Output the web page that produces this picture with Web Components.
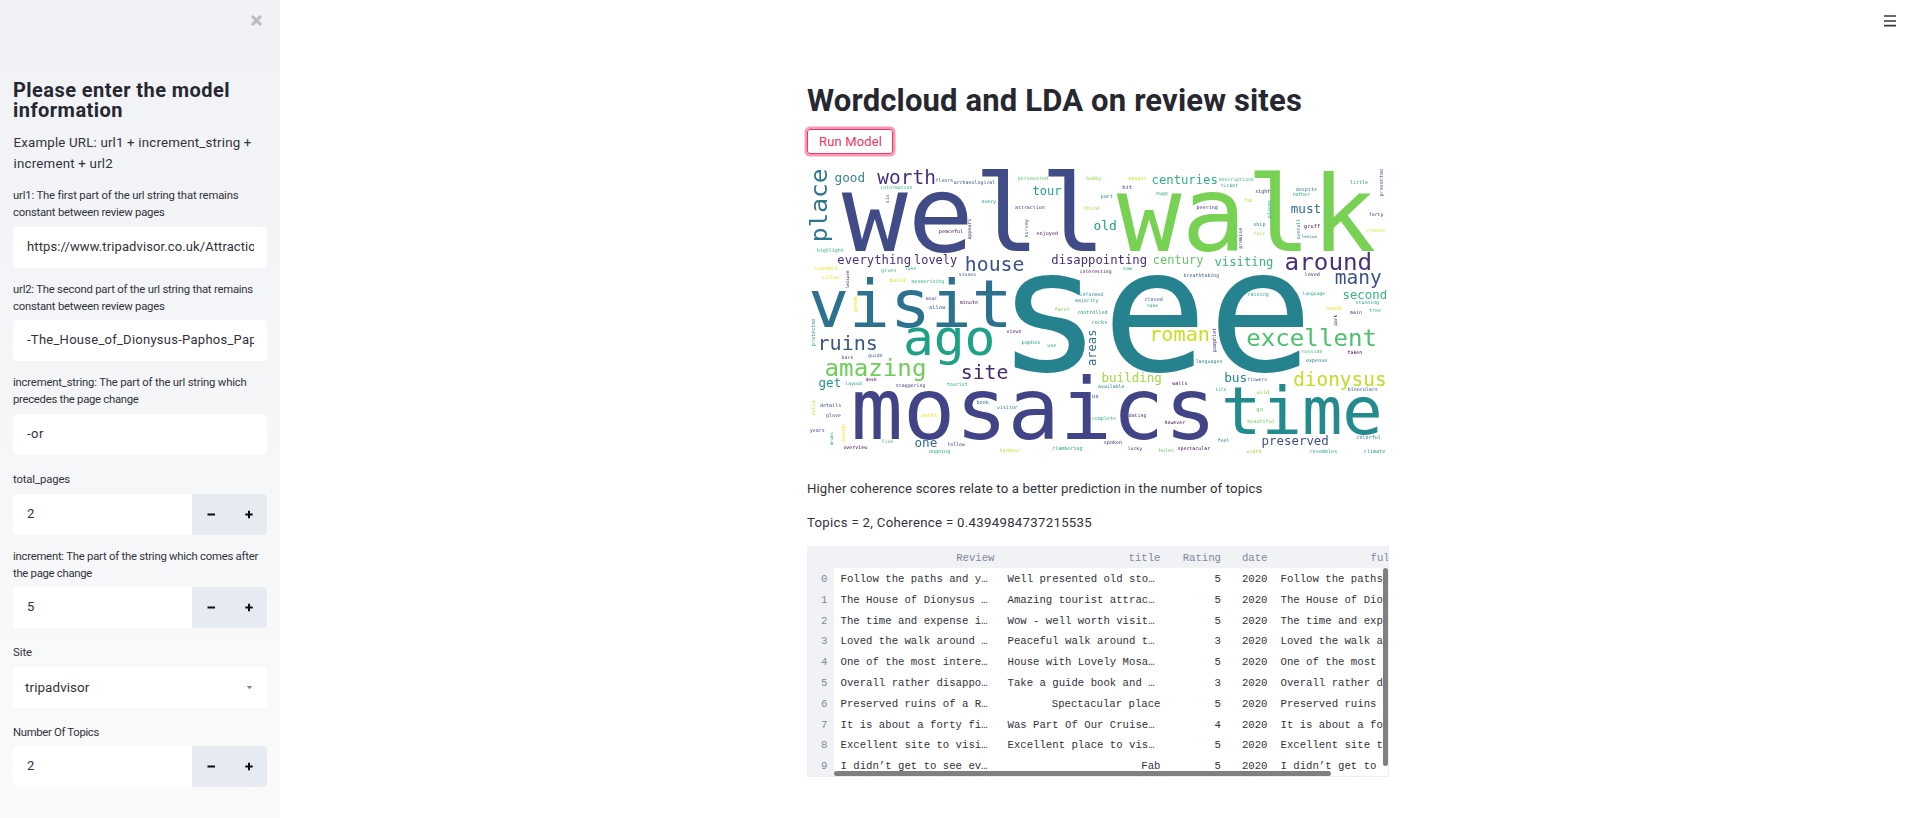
<!DOCTYPE html>
<html lang="en">
<head>
<meta charset="utf-8">
<title>Wordcloud and LDA on review sites</title>
<style>
html,body{margin:0;height:100%;background:#fff;overflow:hidden}
body{font-family:Roboto,"Liberation Sans",sans-serif;color:#31323b;font-size:13px}
</style>
</head>
<body>
<review-app></review-app>
<script>
const define = (name, html, setup) => {
  const template = document.createElement('template');
  template.innerHTML = html;
  customElements.define(name, class extends HTMLElement {
    connectedCallback() {
      if (this.shadowRoot) return;
      this.attachShadow({mode: 'open'}).appendChild(template.content.cloneNode(true));
      if (setup) setup(this, this.shadowRoot);
    }
  });
};

/* One line of text tracked out or in to a given width. */
define('text-line', `<style>:host{display:block;white-space:pre}</style><span id="t"></span>`, (el, root) => {
  const span = root.getElementById('t');
  const text = el.getAttribute('text');
  span.textContent = text;
  const w = parseFloat(el.getAttribute('w'));
  if (w) span.style.letterSpacing = ((w - span.getBoundingClientRect().width) / text.length).toFixed(4) + 'px';
});

define('form-field', `<style>
:host{display:block;margin-top:var(--gap,13px)}
.label{font-size:11.3px;line-height:17px;margin-bottom:var(--lg,6px)}
.box{height:41px;background:#fff;border-radius:4px;display:flex;overflow:hidden}
</style><div class="label"><slot name="label"></slot></div><div class="box"><slot></slot></div>`);

define('text-value', `<style>
:host{display:block;flex:1;min-width:0;overflow:hidden;margin:0 13px 0 14px;font-size:13px;line-height:40px;height:41px}
</style><slot></slot>`);

define('step-buttons', `<style>
:host{display:flex;width:75px;background:#e6eaf1;align-items:center;flex:none}
svg{display:block}
</style><svg width="75" height="41" viewBox="0 0 75 41"><path d="M15.5 20.5h7.5M53.3 20.5h7.4M57 16.8v7.4" stroke="#0c0c10" stroke-width="2" fill="none"/></svg>`);

define('select-value', `<style>
:host{display:flex;flex:1;align-items:center;padding:0 14px 0 12px;font-size:13.4px;line-height:40px}
svg{margin-left:auto}
</style><slot></slot><svg width="7" height="5" viewBox="0 0 7 5"><path d="M.8 1h5.4L3.5 4.2z" fill="#808495"/></svg>`);

define('side-bar', `<style>
:host{display:block;box-sizing:border-box;width:280px;height:818px;padding:14px 13px 0;background:linear-gradient(180deg,#f0f2f6,#fafafa);flex:none}
.close{display:block;margin:0 4px 0 auto}
h2{margin:53px 0 0 0;font-size:20px;line-height:20px;font-weight:700;color:#262730}
.ex{margin:12px 0 0 .5px;font-size:13.3px;line-height:21px}
</style>
<svg class="close" width="13" height="13" viewBox="0 0 13 13"><path d="M2 2l9 9M11 2l-9 9" stroke="#bcbdc4" stroke-width="3.1" fill="none"/></svg>
<h2><text-line text="Please enter the model" w="217"></text-line><text-line text="information" w="110"></text-line></h2>
<div class="ex"><text-line text="Example URL: url1 + increment_string +" w="238"></text-line><text-line text="increment + url2" w="99.5"></text-line></div>
<form-field style="--gap:13px"><div slot="label"><text-line text="url1: The first part of the url string that remains" w="225"></text-line><text-line text="constant between review pages" w="151.5"></text-line></div>
<text-value><text-line text="https://www.tripadvisor.co.uk/Attractions" w="243"></text-line></text-value></form-field>
<form-field style="--lg:5px"><div slot="label"><text-line text="url2: The second part of the url string that remains" w="240"></text-line><text-line text="constant between review pages" w="151.5"></text-line></div>
<text-value><text-line text="-The_House_of_Dionysus-Paphos_Paphos" w="252"></text-line></text-value></form-field>
<form-field><div slot="label"><text-line text="increment_string: The part of the url string which" w="233.5"></text-line><text-line text="precedes the page change" w="125.5"></text-line></div>
<text-value><text-line text="-or" w="17"></text-line></text-value></form-field>
<form-field style="--gap:16px;--lg:6px"><text-line slot="label" text="total_pages" w="57"></text-line>
<text-value><text-line text="2"></text-line></text-value><step-buttons></step-buttons></form-field>
<form-field style="--lg:5px;--gap:13px"><div slot="label"><text-line text="increment: The part of the string which comes after" w="245"></text-line><text-line text="the page change" w="79"></text-line></div>
<text-value><text-line text="5"></text-line></text-value><step-buttons></step-buttons></form-field>
<form-field style="--gap:16px;--lg:6px"><text-line slot="label" text="Site" w="19"></text-line>
<select-value><text-line text="tripadvisor" w="64.5"></text-line></select-value></form-field>
<form-field style="--gap:16px;--lg:5px"><text-line slot="label" text="Number Of Topics" w="86"></text-line>
<text-value><text-line text="2"></text-line></text-value><step-buttons></step-buttons></form-field>`);

/* text, ink start, ink end, baseline, colour; upright words list y instead of x */
const words = [
['well',841.7,1095.3,251,'#404b87'],['walk',1116.7,1374.7,251,'#77d153'],['see',1014,1303.3,370.5,'#26828e'],
['visit',811.3,1006,326.7,'#2c728e'],['mosaics',855,1208.3,439,'#414487'],['time',1225,1379,434.3,'#238a8d'],
['good',835.3,864,181.5,'#38868c'],['worth',877.3,934.3,183.7,'#46307c'],['floors',936,952.7,181.7,'#39568c'],
['archaeological',954,995,184.3,'#3b528b'],['information',880.7,912,188.7,'#35b779'],['every',981.7,996,203,'#21918c'],
['peaceful',939.3,962.7,233.3,'#440154'],['highlight',817.3,843.3,252.3,'#2ab07f'],['everything',838,910,264,'#46327e'],
['lovely',915,956.7,264,'#482878'],['standard',814.7,837.3,270,'#f0e528'],['gives',881.3,896,271.7,'#35b779'],
['take',905.3,916,270,'#35b779'],['villas',822,839,279,'#f0e528'],['build',890,905.3,282,'#dfe318'],
['mesmerising',911.7,944,283.3,'#2fb47c'],['stones',959.3,975.7,276.3,'#3b528b'],['house',966.7,1023.3,271.3,'#3b528b'],
['near',926,936.7,300.3,'#482173'],['allow',929.3,945.3,309.3,'#31688e'],['minute',960,977.7,303.7,'#46085c'],
['persevered',1018,1047.7,180,'#5ec962'],['tour',1033.3,1061,194.7,'#1fa187'],['hubby',1086.7,1101,180,'#8fd744'],
['mosaic',1128.7,1146,180,'#c8e020'],['centuries',1152.7,1216.7,184.3,'#2db27d'],['bit',1122.7,1131.7,188.7,'#414487'],
['part',1101,1112.7,197.7,'#26828e'],['huge',1156.7,1167.7,194.7,'#21a585'],['third',1084,1098.7,210.3,'#a0da39'],
['attraction',1015.3,1044.3,209.3,'#414487'],['enjoyed',1036.7,1057.7,235.3,'#482173'],['old',1094.3,1115.7,229.7,'#1fa187'],
['peering',1197,1217.3,209.3,'#472d7b'],['disappointing',1052,1146,264.3,'#472d7b'],['century',1154,1203,264.3,'#5ec962'],
['interesting',1080,1111.3,273,'#5c1065'],['saw',1123.3,1132.3,270.3,'#35b779'],['breathtaking',1184,1219,276.7,'#33638d'],
['informed',1080,1102.7,296.3,'#21918c'],['majority',1075.3,1098.3,302,'#21918c'],['closed',1145,1162.3,301,'#3b528b'],
['take',1147,1158,307.3,'#21a585'],['facet',1055,1069.3,310.5,'#7ad151'],['controlled',1077.7,1107,314,'#21918c'],
['rocks',1092.3,1107,324,'#22a884'],['descriptions',1219,1253.7,181.3,'#3dbc74'],['ticket',1221,1237.7,187.3,'#21918c'],
['sight',1255.7,1269.7,193,'#482173'],['fab',1244.7,1252.3,201.7,'#c2df23'],['despite',1296,1316.7,190.7,'#26828e'],
['rather',1293,1310,196,'#21a585'],['little',1350.7,1367.7,184.3,'#26828e'],['must',1291.3,1320,213,'#2f6c8e'],
['forty',1369.3,1383.3,216,'#481c6e'],['ship',1253.7,1265.3,226.3,'#2a788e'],['fair',1254,1264.7,235,'#90d743'],
['gruff',1304.3,1319.7,228.3,'#440154'],['lesson',1302,1316.7,238,'#2a788e'],['cruise',1367.3,1384.7,232.3,'#dde318'],
['visiting',1215,1272.3,266,'#35b779'],['around',1286,1370,270,'#46307e'],['loved',1305,1319.3,276,'#472d7b'],
['many',1335.7,1381,284,'#3b528b'],['second',1343.7,1386,299.3,'#35b779'],['stunning',1356,1378.7,303.7,'#22a884'],
['raining',1248.3,1268.3,296.3,'#22a884'],['language',1302.7,1325,294.7,'#22a884'],['round',1326.7,1341.3,309.7,'#e5e419'],
['main',1350,1361.7,313.7,'#404688'],['tree',1369.3,1380.7,312,'#2db27d'],
['ruins',821,876,350,'#39568c'],['ago',906,992.3,355.3,'#1fa187'],['back',842,853.3,359,'#39568c'],
['guide',868.3,882.3,356.7,'#3b528b'],['amazing',826,924.3,376.3,'#6ece58'],['desk',865.7,876.7,381,'#440154'],
['get',819.3,840,386.7,'#1f968b'],['layout',845.7,862.3,385,'#1fa187'],['staggering',896.3,925,386.7,'#453781'],
['tourist',947,967.3,386.3,'#28ae80'],['site',962.7,1007.3,379,'#482878'],['details',820.3,840.7,407,'#3b528b'],
['glove',826.3,840.7,417.3,'#3b528b'],['years',810,824.3,431.7,'#3b528b'],['overview',843.7,867.3,449,'#440154'],
['five',882,893,443,'#4ac16d'],['one',915.3,936.7,447.3,'#2f6c8e'],['follow',947.7,965,446,'#472d7b'],
['ongoing',929.3,949.7,453.3,'#22a884'],['paths',921.7,936.7,417.3,'#f0e528'],['book',977,988.7,403.7,'#2c728e'],
['visitor',997.3,1017.7,408.7,'#2c728e'],['views',1006.7,1021,332.7,'#482173'],['paphos',1022,1040,344.3,'#22a884'],
['use',1047.7,1056,346.7,'#22a884'],['roman',1152.7,1208.3,341.3,'#c8e020'],['building',1102.7,1160.7,382.3,'#a0da39'],
['available',1098.3,1124.3,388,'#26828e'],['walls',1172.3,1187,384.7,'#440154'],['us',1092.3,1098.3,398,'#3b528b'],
['complete',1092.3,1115.7,420,'#35b779'],['dating',1129,1146,417.3,'#482878'],['however',1165,1185,424,'#440154'],
['languages',1196,1222,363.3,'#26828e'],['spoken',1104.3,1121.7,444.3,'#472d7b'],['lucky',1128,1142,450.3,'#472d7b'],
['clambering',1052.7,1082,450.3,'#1fa187'],['harbour',1000,1020,451.7,'#bddf26'],['holes',1159.3,1173.7,451.7,'#5ec962'],
['spectacular',1178,1210,450.3,'#440154'],['excellent',1247.7,1374.7,345.7,'#4ac16d'],['russian',1302,1322.3,353,'#3dbc74'],
['taken',1347.7,1362,354.3,'#440154'],['expense',1306.3,1327,361.7,'#26828e'],['bus',1225.3,1246,382.3,'#22898c'],
['flowers',1247.7,1266.7,381,'#3b528b'],['dionysus',1294.3,1384.7,386.3,'#bddf26'],['binoculars',1348.3,1377.3,391,'#39568c'],
['life',1215.3,1226,390.7,'#22a884'],['wild',1256.7,1268.7,393.7,'#90d743'],['go',1256.7,1262.7,411.3,'#5ec962'],
['beautiful',1247.7,1274.3,422.7,'#6ece58'],['preserved',1262.7,1327.7,444.7,'#414d88'],['feel',1218,1229,441.7,'#2c728e'],
['colorful',1357,1380.3,438.7,'#2c728e'],['width',1246.7,1261,453.3,'#a0da39'],['resembles',1310.7,1336.7,453.3,'#22a884'],
['climate',1364.3,1385,453.3,'#21918c']
];
const upright = [
['place',240,170,827.3,'#2a788e'],['six',202.7,194.7,888.7,'#3b528b'],['appears',239.3,219.3,971.3,'#482878'],
['leisure',288,270.7,849.3,'#440154'],['greek',312,296,857.3,'#e5e419'],['survey',237,219.3,1028,'#33638d'],
['presented',196,169.3,1383.3,'#3b528b'],['places',217.7,200.3,1271.3,'#1f9e89'],['premise',248.3,228,1242.3,'#453781'],
['overall',239.3,219.3,1300,'#26828e'],['park',325.3,314.7,1337.3,'#440154'],['protected',345.7,319,815.3,'#21918c'],
['villa',415.3,400.7,814.7,'#c8e020'],['drums',444.7,432.7,833,'#21918c'],['enough',441.7,424.3,845.3,'#f0e528'],
['areas',365.3,330.7,1096.3,'#2c728e'],['pamphlet',351.7,328.3,1216,'#46327e']
];

define('word-cloud', `<style>
:host{display:block;width:582px;height:291px}
svg{display:block;overflow:visible;font-family:"DejaVu Sans Mono",monospace;filter:blur(.45px)}
</style><svg width="582" height="291" viewBox="807 164 582 291"></svg>`, (el, root) => {
  const ctx = document.createElement('canvas').getContext('2d');
  ctx.font = '200px "DejaVu Sans Mono", monospace';
  const ink = word => {
    const m = ctx.measureText(word);
    return {left: -m.actualBoundingBoxLeft / 200, width: (m.actualBoundingBoxRight + m.actualBoundingBoxLeft) / 200};
  };
  const out = words.map(([t, a, b, y, c]) => {
    const k = ink(t), size = (b - a) / k.width;
    return `<text transform="translate(${(a - k.left * size).toFixed(2)} ${y}) scale(1 .975)" font-size="${size.toFixed(3)}" fill="${c}">${t}</text>`;
  }).concat(upright.map(([t, a, b, x, c]) => {
    const k = ink(t), size = (a - b) / k.width;
    return `<text transform="translate(${x} ${(a + k.left * size).toFixed(2)}) rotate(-90) scale(1 .975)" font-size="${size.toFixed(3)}" fill="${c}">${t}</text>`;
  }));
  root.querySelector('svg').innerHTML = out.join('');
});

const rows = [
['Follow the paths and y…','Well presented old sto…',5,'Follow the paths and y…'],
['The House of Dionysus …','Amazing tourist attrac…',5,'The House of Dionysus …'],
['The time and expense i…','Wow - well worth visit…',5,'The time and expense i…'],
['Loved the walk around …','Peaceful walk around t…',3,'Loved the walk around …'],
['One of the most intere…','House with Lovely Mosa…',5,'One of the most intere…'],
['Overall rather disappo…','Take a guide book and …',3,'Overall rather disappo…'],
['Preserved ruins of a R…','Spectacular place',5,'Preserved ruins of a R…'],
['It is about a forty fi…','Was Part Of Our Cruise…',4,'It is about a forty fi…'],
['Excellent site to visi…','Excellent place to vis…',5,'Excellent site to visi…'],
['I didn’t get to see ev…','Fab',5,'I didn’t get to see ev…']
];
define('data-table', `<style>
:host{display:block;position:relative;box-sizing:border-box;width:582px;height:231px;overflow:hidden;border-right:1px solid #eceef2;border-bottom:1px solid #eceef2;font:10.67px "Liberation Mono",monospace;white-space:pre}
.row{display:grid;grid-template-columns:27px 167px 166px 60.5px 46.5px 109px;height:20.8px;line-height:22.6px}
.row>*{padding:0 6.5px;text-align:right;overflow:hidden}
.row.head{grid-template-columns:27px 167px 166px 60.5px 46.5px 170px;height:22px;line-height:25px;background:#f0f2f6}
.head,.row>:first-child{color:#7f88a0}
.row>:first-child{background:#f0f2f6}
.row>.l{text-align:left}
.head>:last-child{padding-left:96.5px;text-align:left}
.h,.v{position:absolute;background:#808080;border-radius:3px}
.h{left:27px;top:225px;width:497px;height:5px}
.v{right:0;top:22px;width:5px;height:198px}
</style><div class="row head"><span></span><span>Review</span><span>title</span><span>Rating</span><span>date</span><span>full_review</span></div><div id="b"></div><div class="h"></div><div class="v"></div>`, (el, root) => {
  const cell = t => `<span class="${t.endsWith('…') ? 'l' : ''}">${t}</span>`;
  root.getElementById('b').innerHTML = rows.map((r, i) =>
    `<div class="row"><span>${i}</span>${cell(r[0])}${cell(r[1])}<span>${r[2]}</span><span>2020</span>${cell(r[3])}</div>`).join('');
});

define('run-button', `<style>
:host{display:block;width:86px}
button{all:unset;box-sizing:border-box;display:block;width:86px;height:25px;padding:0 0 0 11px;border:1px solid #f63366;border-radius:3px;box-shadow:0 0 0 2.5px rgba(246,51,102,.5);color:#f63366;font-size:13px;line-height:22px}
</style><button><text-line text="Run Model" w="63"></text-line></button>`);

define('menu-icon', `<style>:host{display:block}svg{display:block}</style>
<svg width="12" height="12" viewBox="0 0 12 12"><path d="M0 1h12M0 6h12M0 10.7h12" stroke="#38393f" stroke-width="1.7"/></svg>`);

define('review-app', `<style>
:host{display:flex;height:818px;width:1911px}
main{flex:1;display:flex;align-items:flex-start}
.col{width:582px;margin:81px 0 0 527px}
h1{margin:0 0 9px;font-size:31px;line-height:39px;font-weight:700;color:#262730}
word-cloud{margin-top:10px}
.p{margin-top:24px;font-size:13.2px;line-height:20px}
.p+.p{margin-top:14px}
data-table{margin-top:13px}
menu-icon{margin:15px 15px 0 auto}
</style><side-bar></side-bar><main><div class="col">
<h1><text-line text="Wordcloud and LDA on review sites" w="495"></text-line></h1>
<run-button></run-button>
<word-cloud></word-cloud>
<div class="p"><text-line text="Higher coherence scores relate to a better prediction in the number of topics" w="455.5"></text-line></div>
<div class="p"><text-line text="Topics = 2, Coherence = 0.4394984737215535" w="285"></text-line></div>
<data-table></data-table>
</div><menu-icon></menu-icon></main>`);
</script>
</body>
</html>
